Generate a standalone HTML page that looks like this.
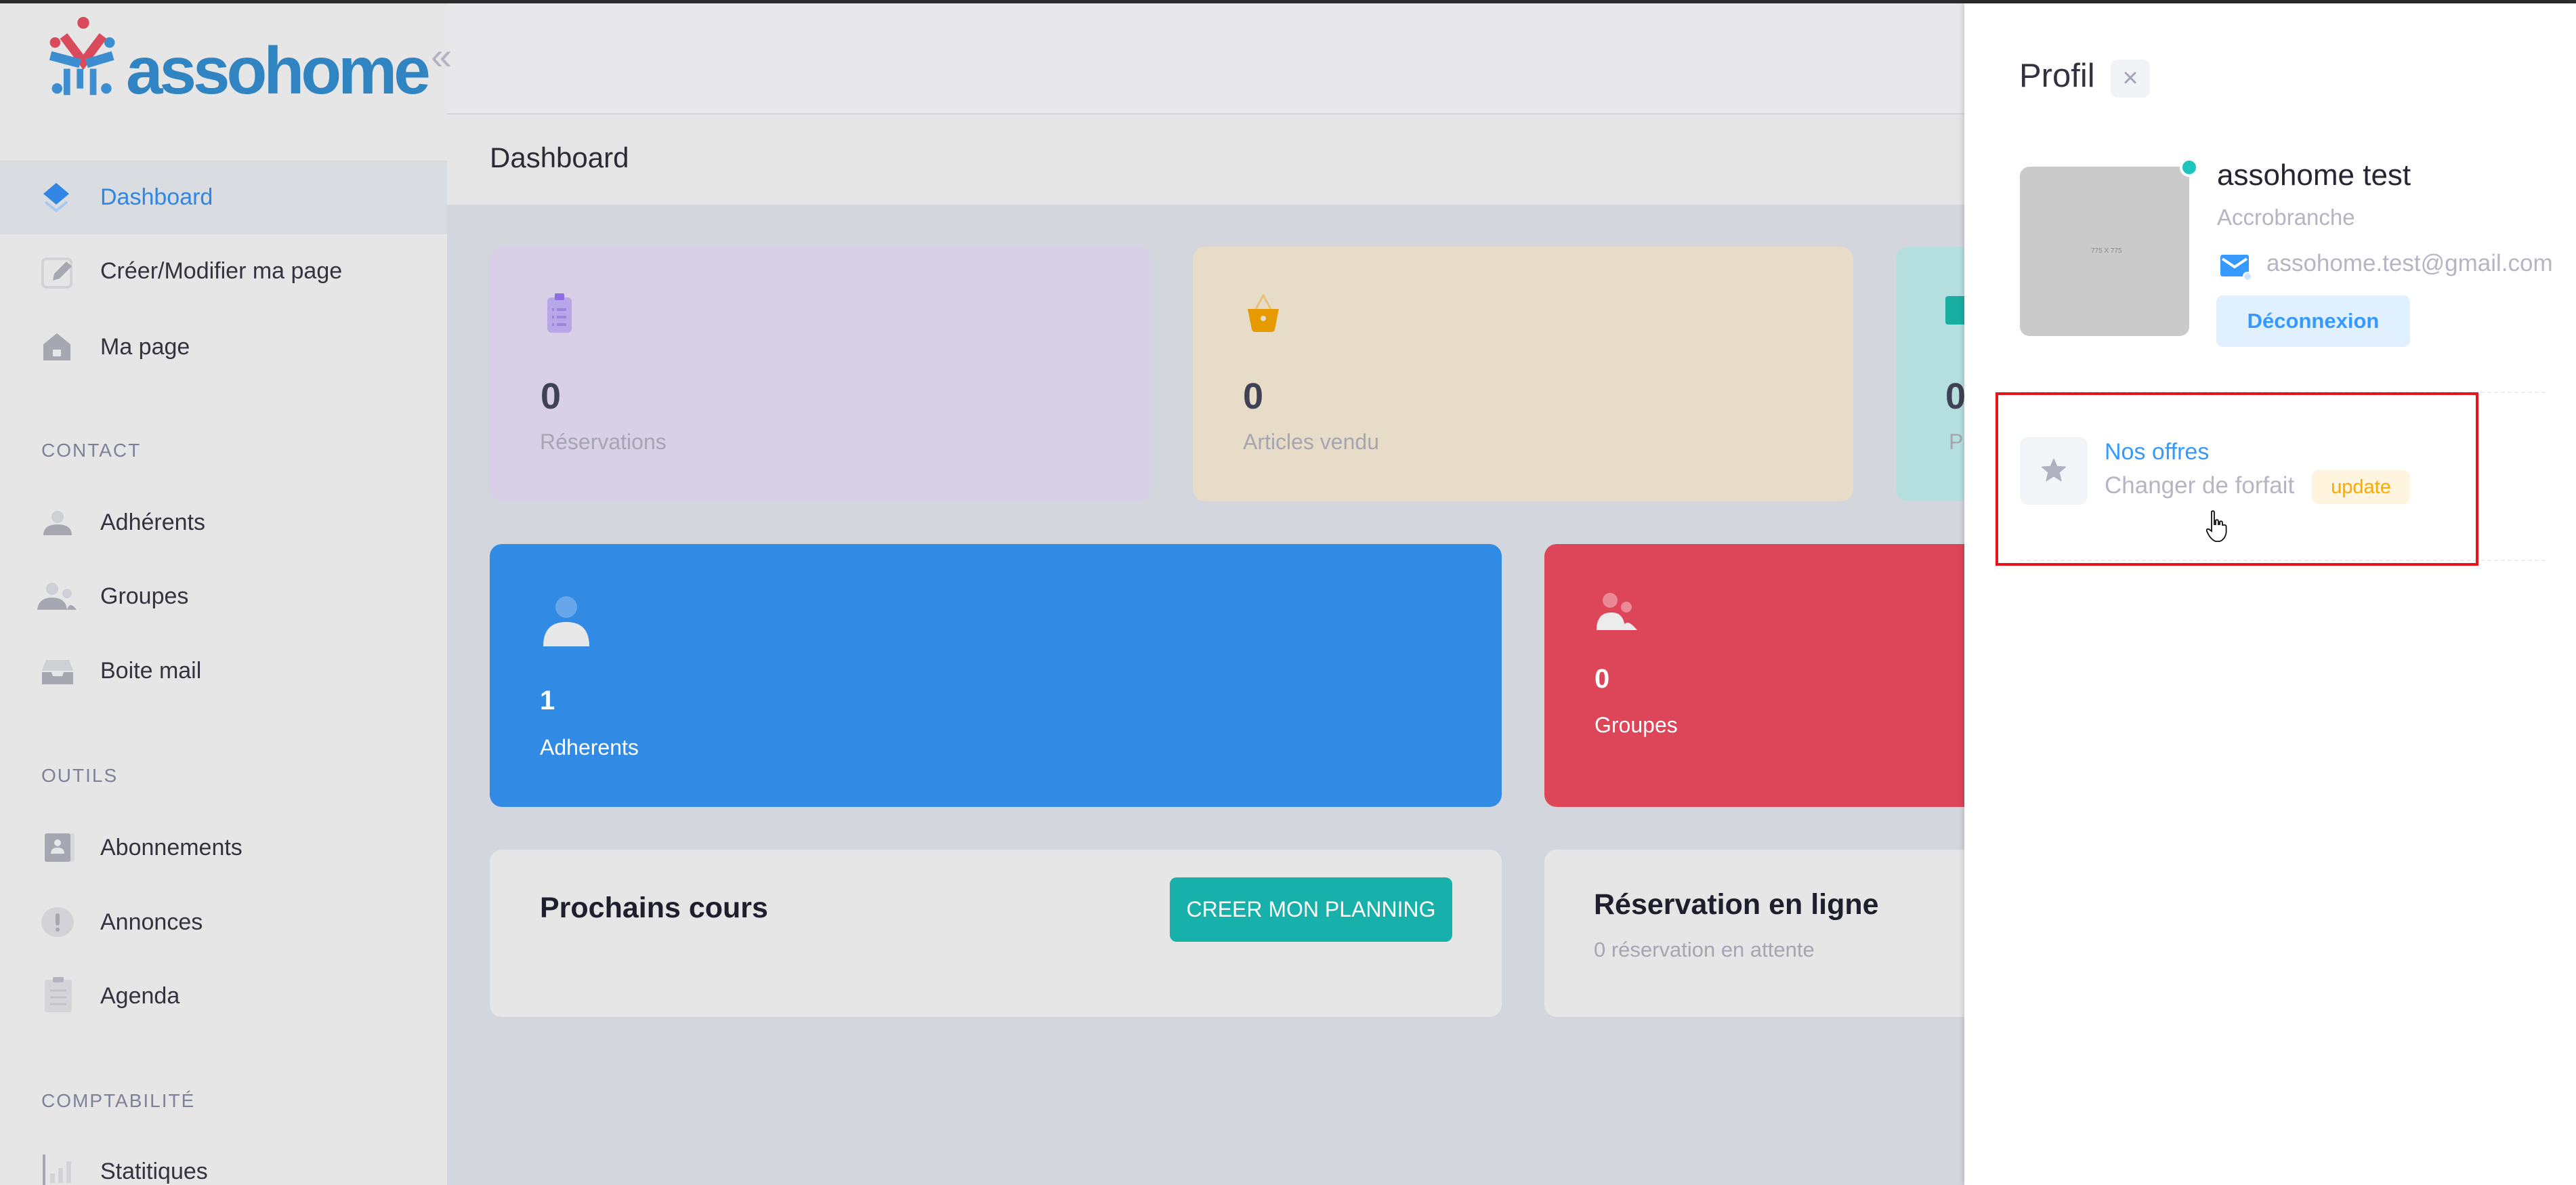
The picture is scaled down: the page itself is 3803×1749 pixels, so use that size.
<!DOCTYPE html>
<html><head><meta charset="utf-8">
<style>
*{margin:0;padding:0;box-sizing:border-box}
body{width:3803px;height:1749px;overflow:hidden;background:#d4d6de;font-family:"Liberation Sans",sans-serif;position:relative}
.a{position:absolute}
.t{position:absolute;white-space:nowrap;line-height:1}
.mi{font-size:34px;color:#33333f;left:148px}
.sec{font-size:28px;color:#7e8299;left:61px;letter-spacing:2px}
.card{position:absolute;border-radius:18px}
</style></head><body>
<div class="a" style="left:0;top:0;width:3803px;height:5px;background:#2b2b2b"></div>
<div class="a" style="left:0;top:5px;width:660px;height:1744px;background:#e6e6e6"></div>
<div class="a" style="left:660px;top:5px;width:2240px;height:163px;background:#e8e8ea"></div>
<div class="a" style="left:660px;top:167px;width:2240px;height:2px;background:#d6d6da"></div>
<div class="a" style="left:660px;top:169px;width:2240px;height:133px;background:#e5e5e6"></div>
<div class="t" style="left:723px;top:212px;font-size:42px;color:#2b2b35">Dashboard</div>

<svg class="a" style="left:60px;top:24px" width="126" height="124" viewBox="0 0 130 128">
<circle cx="65" cy="10" r="9" fill="#d94a5c"/><circle cx="22" cy="40" r="8" fill="#d94a5c"/><circle cx="105" cy="40" r="8" fill="#3d8ed0"/>
<path d="M35 30 L65 70 L95 30" stroke="#d94a5c" stroke-width="14" fill="none"/>
<path d="M15 60 L60 72 M110 60 L70 72" stroke="#3d8ed0" stroke-width="14"/>
<path d="M40 80 L40 120 M80 80 L80 120 M60 80 L60 110" stroke="#3d8ed0" stroke-width="10"/>
<circle cx="25" cy="110" r="8" fill="#3d8ed0"/><circle cx="100" cy="110" r="8" fill="#3d8ed0"/>
</svg>
<div class="t" style="left:186px;top:55px;font-size:98px;font-weight:bold;color:#3184c2;letter-spacing:-5px">assohome</div>
<div class="t" style="left:636px;top:55px;font-size:56px;color:#b2b4c2">«</div>

<div class="a" style="left:0;top:237px;width:660px;height:109px;background:#d9dde1"></div>
<svg class="a" style="left:62px;top:268px" width="42" height="48"><path d="M21 2 L40 18 L21 34 L2 18Z" fill="#3186e3"/><path d="M5 30 L21 43 L37 30" stroke="#a9c9ef" stroke-width="4" fill="none"/></svg>
<div class="t mi" style="top:274px;color:#3186e3">Dashboard</div>
<svg class="a" style="left:60px;top:378px" width="50" height="50"><rect x="3" y="4" width="42" height="42" rx="6" fill="none" stroke="#d2d2d7" stroke-width="4"/><path d="M18 36 L20 26 L38 8 L46 15 L28 33Z" fill="#a7a7b1"/></svg>
<div class="t mi" style="top:383px">Créer/Modifier ma page</div>
<svg class="a" style="left:62px;top:490px" width="44" height="44"><path d="M2 18 L22 2 L42 18 L42 42 L2 42Z" fill="#a7a7b1"/><rect x="16" y="26" width="12" height="10" fill="#e6e6e6"/></svg>
<div class="t mi" style="top:495px">Ma page</div>

<div class="t sec" style="top:651px">CONTACT</div>
<svg class="a" style="left:62px;top:752px" width="46" height="40"><circle cx="23" cy="11" r="9" fill="#cfcfd6"/><path d="M2 38 Q2 22 23 22 Q44 22 44 38Z" fill="#a7a7b1"/></svg>
<div class="t mi" style="top:754px">Adhérents</div>
<svg class="a" style="left:55px;top:858px" width="60" height="44"><circle cx="22" cy="11" r="9" fill="#cfcfd6"/><circle cx="44" cy="18" r="7" fill="#cfcfd6"/><path d="M0 42 Q2 24 22 24 Q42 24 44 42Z" fill="#a7a7b1"/><path d="M44 42 Q48 28 58 42Z" fill="#a7a7b1"/></svg>
<div class="t mi" style="top:863px">Groupes</div>
<svg class="a" style="left:60px;top:970px" width="50" height="44"><path d="M8 4 L42 4 L48 20 L2 20Z" fill="#cfcfd6"/><path d="M2 22 L16 22 L18 28 L32 28 L34 22 L48 22 L48 40 L2 40Z" fill="#a7a7b1"/></svg>
<div class="t mi" style="top:973px">Boite mail</div>

<div class="t sec" style="top:1131px">OUTILS</div>
<svg class="a" style="left:64px;top:1228px" width="48" height="46"><rect x="10" y="2" width="36" height="42" rx="3" fill="#d7d7dc"/><rect x="2" y="2" width="38" height="42" rx="3" fill="#a7a7b1"/><circle cx="21" cy="16" r="5" fill="#e6e6e6"/><path d="M11 32 Q11 23 21 23 Q31 23 31 32Z" fill="#e6e6e6"/></svg>
<div class="t mi" style="top:1234px">Abonnements</div>
<svg class="a" style="left:60px;top:1338px" width="50" height="46"><ellipse cx="25" cy="23" rx="24" ry="22" fill="#d2d2d7"/><rect x="22" y="10" width="6" height="18" rx="3" fill="#a7a7b1"/><circle cx="25" cy="34" r="3" fill="#a7a7b1"/></svg>
<div class="t mi" style="top:1344px">Annonces</div>
<svg class="a" style="left:64px;top:1440px" width="44" height="56"><rect x="2" y="6" width="40" height="48" rx="4" fill="#d4d4d9"/><rect x="14" y="2" width="16" height="8" rx="2" fill="#b5b5bd"/><path d="M10 22H34M10 32H34M10 42H34" stroke="#c2c2c9" stroke-width="3"/></svg>
<div class="t mi" style="top:1453px">Agenda</div>

<div class="t sec" style="top:1611px">COMPTABILITÉ</div>
<svg class="a" style="left:62px;top:1704px" width="46" height="45"><path d="M3 0V45" stroke="#a7a7b1" stroke-width="4"/><rect x="12" y="28" width="7" height="14" fill="#d2d2d7"/><rect x="24" y="20" width="7" height="22" fill="#d2d2d7"/><rect x="36" y="10" width="7" height="32" fill="#d2d2d7"/></svg>
<div class="t mi" style="top:1712px">Statitiques</div>

<div class="card" style="left:723px;top:364px;width:975px;height:376px;background:#d8d0e6"></div>
<svg class="a" style="left:806px;top:433px" width="40" height="60"><rect x="2" y="6" width="36" height="52" rx="6" fill="#b8a7e8"/><rect x="13" y="0" width="14" height="10" rx="2" fill="#8c6ee0"/><path d="M9 24h3M16 24h14M9 35h3M16 35h14M9 46h3M16 46h14" stroke="#9c85e0" stroke-width="4"/></svg>
<div class="t" style="left:798px;top:558px;font-size:54px;font-weight:bold;color:#3f4254">0</div>
<div class="t" style="left:797px;top:636px;font-size:32px;color:#a6a6b2">Réservations</div>

<div class="card" style="left:1761px;top:364px;width:975px;height:376px;background:#e6dcc7"></div>
<svg class="a" style="left:1840px;top:434px" width="50" height="56"><path d="M14 22 L25 2 L36 22" stroke="#e8c27a" stroke-width="3" fill="none"/><path d="M2 22 H48 L42 52 Q41 56 37 56 H13 Q9 56 8 52Z" fill="#e59a00"/><circle cx="25" cy="36" r="4" fill="#e6dcc7"/></svg>
<div class="t" style="left:1835px;top:558px;font-size:54px;font-weight:bold;color:#3f4254">0</div>
<div class="t" style="left:1835px;top:636px;font-size:32px;color:#a6a6b2">Articles vendu</div>

<div class="card" style="left:2799px;top:364px;width:200px;height:376px;background:#b5dfde"></div>
<div class="a" style="left:2872px;top:437px;width:28px;height:42px;background:#1aaea3;border-radius:4px 0 0 4px"></div>
<div class="t" style="left:2872px;top:558px;font-size:54px;font-weight:bold;color:#3f4254">0</div>
<div class="t" style="left:2877px;top:636px;font-size:32px;color:#a6a6b2">Po</div>

<div class="card" style="left:723px;top:803px;width:1494px;height:388px;background:#318ae3"></div>
<svg class="a" style="left:796px;top:878px" width="80" height="78"><circle cx="40" cy="18" r="16" fill="#66a6ea"/><path d="M6 76 Q6 40 40 40 Q74 40 74 76Z" fill="#e8e8e8"/></svg>
<div class="t" style="left:797px;top:1014px;font-size:40px;font-weight:bold;color:#fff">1</div>
<div class="t" style="left:797px;top:1087px;font-size:32px;color:#fff">Adherents</div>

<div class="card" style="left:2280px;top:803px;width:660px;height:388px;background:#dd4558"></div>
<svg class="a" style="left:2355px;top:874px" width="66" height="58"><circle cx="22" cy="12" r="11" fill="#ea8a96"/><circle cx="46" cy="22" r="8" fill="#ea8a96"/><path d="M2 56 Q2 30 24 30 Q44 30 44 56Z" fill="#ececec"/><path d="M40 56 Q44 34 62 56Z" fill="#ececec"/></svg>
<div class="t" style="left:2354px;top:982px;font-size:40px;font-weight:bold;color:#fff">0</div>
<div class="t" style="left:2354px;top:1054px;font-size:32px;color:#fff">Groupes</div>

<div class="card" style="left:723px;top:1254px;width:1494px;height:247px;background:#e6e6e6"></div>
<div class="t" style="left:797px;top:1319px;font-size:43px;font-weight:bold;color:#1e1e2d">Prochains cours</div>
<div class="a" style="left:1727px;top:1295px;width:417px;height:95px;background:#18b0aa;border-radius:10px;color:#fff;font-size:32px;text-align:center;line-height:95px">CREER MON PLANNING</div>
<div class="card" style="left:2280px;top:1254px;width:660px;height:247px;background:#e6e6e6"></div>
<div class="t" style="left:2353px;top:1314px;font-size:43px;font-weight:bold;color:#1e1e2d">Réservation en ligne</div>
<div class="t" style="left:2353px;top:1386px;font-size:31px;color:#a6a6b2">0 réservation en attente</div>

<div class="a" style="left:2900px;top:5px;width:903px;height:1744px;background:#fff;box-shadow:-3px 0 6px rgba(0,0,0,0.12)"></div>
<div class="t" style="left:2981px;top:88px;font-size:49px;color:#33333f">Profil</div>
<div class="a" style="left:3116px;top:88px;width:58px;height:56px;background:#f1f3f7;border-radius:10px;color:#a1a5b7;font-size:40px;text-align:center;line-height:54px">×</div>
<div class="a" style="left:2982px;top:246px;width:250px;height:250px;background:#cacaca;border-radius:14px"></div>
<div class="t" style="left:3087px;top:366px;font-size:10px;color:#888">775 X 775</div>
<div class="a" style="left:3218px;top:233px;width:28px;height:28px;background:#1bc5bd;border:4px solid #fff;border-radius:50%"></div>
<div class="t" style="left:3273px;top:237px;font-size:44px;color:#262633">assohome test</div>
<div class="t" style="left:3273px;top:304px;font-size:33px;color:#b5b5c3">Accrobranche</div>
<svg class="a" style="left:3277px;top:374px" width="48" height="40"><rect x="1" y="2" width="42" height="32" rx="3" fill="#3699ff"/><path d="M4 8 L22 20 L40 8" stroke="#fff" stroke-width="4" fill="none"/><circle cx="41" cy="34" r="6" fill="#cfe3ff" stroke="#fff" stroke-width="2"/></svg>
<div class="t" style="left:3346px;top:371px;font-size:35px;color:#b5b5c3">assohome.test@gmail.com</div>
<div class="a" style="left:3272px;top:436px;width:286px;height:76px;background:#e1f0ff;border-radius:10px;color:#3699ff;font-size:31px;font-weight:bold;text-align:center;line-height:76px">Déconnexion</div>
<div class="a" style="left:2982px;top:578px;width:776px;border-top:2px dashed #ebedf3"></div>
<div class="a" style="left:2982px;top:826px;width:776px;border-top:2px dashed #ebedf3"></div>
<div class="a" style="left:2982px;top:645px;width:100px;height:100px;background:#f3f6f9;border-radius:12px"></div>
<svg class="a" style="left:3013px;top:676px" width="38" height="36" viewBox="0 0 24 23"><path d="M12 1 L15 8 L23 8.5 L17 13.5 L19 21.5 L12 17 L5 21.5 L7 13.5 L1 8.5 L9 8Z" fill="#b0b0c0" stroke="#b0b0c0" stroke-linejoin="round"/></svg>
<div class="t" style="left:3107px;top:650px;font-size:34px;color:#3699ff">Nos offres</div>
<div class="t" style="left:3107px;top:699px;font-size:35px;color:#b5b5c3">Changer de forfait</div>
<div class="a" style="left:3413px;top:694px;width:145px;height:50px;background:#fff4de;border-radius:10px;color:#ffa800;font-size:29px;text-align:center;line-height:50px">update</div>
<div class="a" style="left:2946px;top:579px;width:713px;height:256px;border:4px solid #e8141a"></div>
<svg class="a" style="left:3255px;top:752px" width="34" height="50" viewBox="0 0 17 25"><path d="M5 1.5 Q6.5 0.5 7 2 L7 11 L8 11 L8 8 Q9.5 7 10 8.5 L10 11 L11 11 L11 9 Q12.5 8 13 9.5 L13 11.5 L14 11.5 Q15.5 11 15.8 12.5 L15.8 17 Q15 22 11 23.5 L8 23.5 Q4 22 1.5 16 Q1 14 3 14.5 L5 16Z" fill="#fff" stroke="#111" stroke-width="0.9"/></svg>
</body></html>
